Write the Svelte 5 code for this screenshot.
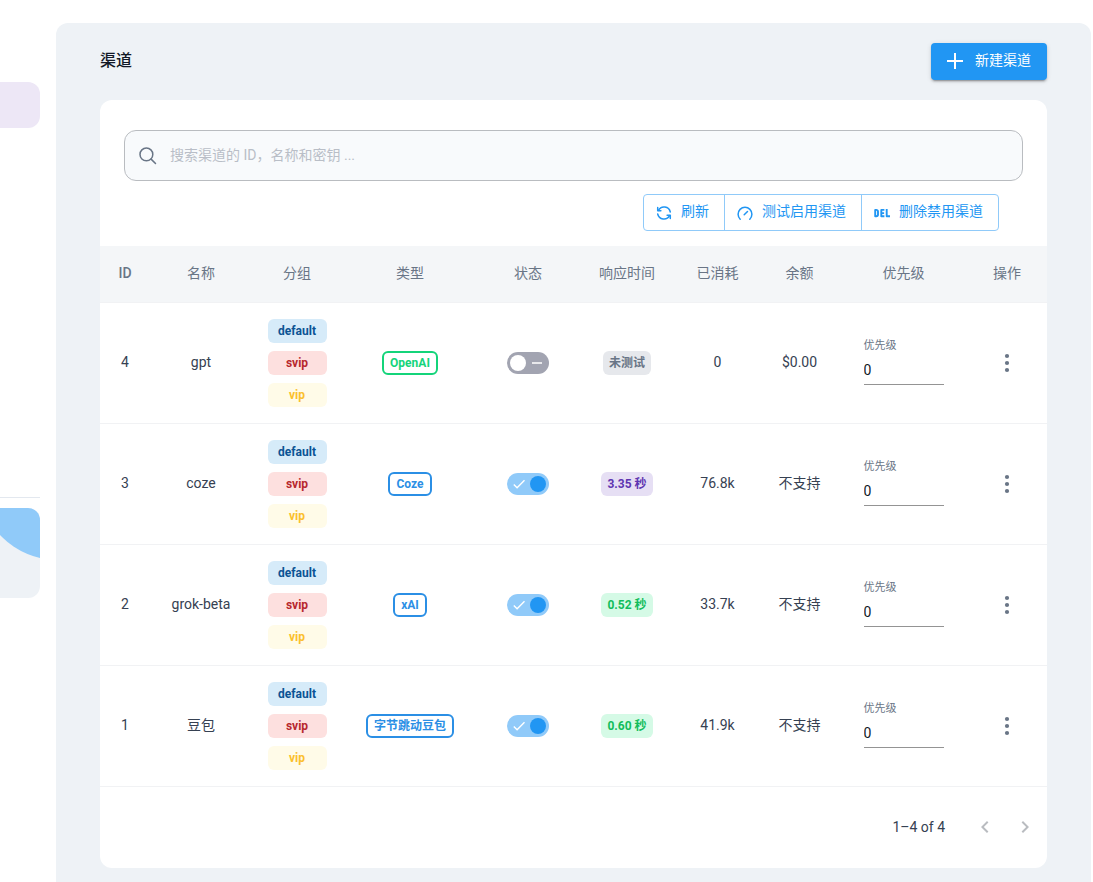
<script lang="ts">
	interface Channel {
		id: number;
		name: string;
		groups: string[];
		type: string;
		typeColor: string;
		enabled: boolean;
		response: string;
		speed: string;
		used: string;
		balance: string;
		priority: number;
	}

	const headers = ['ID', '名称', '分组', '类型', '状态', '响应时间', '已消耗', '余额', '优先级', '操作'];
	const groups = ['default', 'svip', 'vip'];

	let keyword = $state('');
	let channels: Channel[] = $state([
		{ id: 4, name: 'gpt', groups, type: 'OpenAI', typeColor: 'green', enabled: false, response: '未测试', speed: 'none', used: '0', balance: '$0.00', priority: 0 },
		{ id: 3, name: 'coze', groups, type: 'Coze', typeColor: 'blue', enabled: true, response: '3.35 秒', speed: 'medium', used: '76.8k', balance: '不支持', priority: 0 },
		{ id: 2, name: 'grok-beta', groups, type: 'xAI', typeColor: 'blue', enabled: true, response: '0.52 秒', speed: 'fast', used: '33.7k', balance: '不支持', priority: 0 },
		{ id: 1, name: '豆包', groups, type: '字节跳动豆包', typeColor: 'blue', enabled: true, response: '0.60 秒', speed: 'fast', used: '41.9k', balance: '不支持', priority: 0 }
	]);
</script>

<div class="layout">
	<aside class="sidebar">
		<div class="menu-active"></div>
		<div class="side-bottom">
			<div class="user-card"></div>
		</div>
	</aside>

	<main class="panel">
		<header class="page-header">
			<h1>渠道</h1>
			<button class="btn-new">
				<svg width="20" height="20" viewBox="0 0 20 20" fill="none" stroke="currentColor" stroke-width="2">
					<path d="M10 1v16M2 9h16" />
				</svg>
				<span class="btn-text">新建渠道</span>
			</button>
		</header>

		<section class="card">
			<div class="search">
				<svg width="20" height="20" viewBox="0 0 20 20" fill="none" stroke="currentColor" stroke-width="1.5" stroke-linecap="round">
					<circle cx="8.4" cy="8.4" r="6.4" />
					<path d="M13.1 13.1l4.4 4.4" />
				</svg>
				<input type="text" bind:value={keyword} placeholder="搜索渠道的 ID，名称和密钥 ..." aria-label="搜索渠道" />
			</div>

			<div class="toolbar">
				<div class="btn-group">
					<button>
						<svg width="18" height="18" viewBox="0 0 18 18" fill="none" stroke="currentColor" stroke-width="1.5" stroke-linecap="round" stroke-linejoin="round">
							<path d="M3.4 6.4A6.4 6.4 0 0 1 15.3 8" />
							<path d="M2.7 3.6v3.2h3.2" />
							<path d="M14.6 11.6A6.4 6.4 0 0 1 2.7 10" />
							<path d="M15.3 14.4v-3.2h-3.2" />
						</svg>
						<span class="btn-text">刷新</span>
					</button>
					<button>
						<svg width="18" height="18" viewBox="0 0 18 18" fill="none" stroke="currentColor" stroke-width="1.5" stroke-linecap="round" stroke-linejoin="round">
							<path d="M4.2 15.2a6.9 6.9 0 1 1 9.6 0" />
							<path d="M8.2 10.8l3.3-3.3" />
						</svg>
						<span class="btn-text">测试启用渠道</span>
					</button>
					<button>
						<svg width="18" height="18" viewBox="0 0 18 18" fill="none" stroke="currentColor" stroke-width="1.9" stroke-linejoin="round">
							<path d="M2.2 5.9v6.4h1.1a1.7 1.7 0 0 0 1.7-1.7v-3A1.7 1.7 0 0 0 3.3 5.9z" />
							<path d="M11.4 5.9H8.3v6.4h3.1M8.3 9.1h2.8" />
							<path d="M13.7 5v7.3h3.3" />
						</svg>
						<span class="btn-text">删除禁用渠道</span>
					</button>
				</div>
			</div>

			<table>
				<thead>
					<tr>
						{#each headers as header}
							<th>{header}</th>
						{/each}
					</tr>
				</thead>
				<tbody>
					{#each channels as channel (channel.id)}
						<tr>
							<td>{channel.id}</td>
							<td>{channel.name}</td>
							<td class="tall">
								<div class="groups">
									{#each channel.groups as group}
										<span class="tag {group}">{group}</span>
									{/each}
								</div>
							</td>
							<td><span class="tag outlined {channel.typeColor}">{channel.type}</span></td>
							<td>
								<label class="switch">
									<input type="checkbox" bind:checked={channel.enabled} aria-label="启用 {channel.name}" />
									<svg width="42" height="22" viewBox="0 0 42 22" fill="none" stroke="#fff">
										{#if channel.enabled}
											<path d="M6.8 11.4l3.3 3.3 7.4-7.4" stroke-width="1.4" />
											<circle cx="31" cy="11" r="8" fill="#2196f3" stroke="none" />
										{:else}
											<circle cx="11" cy="11" r="8" fill="#fff" stroke="none" />
											<path d="M25 11h10" stroke-width="1.5" />
										{/if}
									</svg>
								</label>
							</td>
							<td><span class="tag {channel.speed}">{channel.response}</span></td>
							<td>{channel.used}</td>
							<td>{channel.balance}</td>
							<td>
								<div class="priority">
									<label for="priority-{channel.id}">优先级</label>
									<input id="priority-{channel.id}" type="text" inputmode="numeric" bind:value={channel.priority} />
								</div>
							</td>
							<td class="tall">
								<button class="icon-btn" aria-label="操作">
									<svg width="24" height="24" viewBox="0 0 24 24" fill="currentColor">
										<circle cx="12" cy="5" r="2.1" />
										<circle cx="12" cy="12" r="2.1" />
										<circle cx="12" cy="19" r="2.1" />
									</svg>
								</button>
							</td>
						</tr>
					{/each}
				</tbody>
			</table>

			<footer class="pagination">
				<span>1–4 of 4</span>
				<div class="pager">
					<button class="icon-btn" disabled aria-label="上一页">
						<svg width="24" height="24" viewBox="0 0 24 24" fill="currentColor">
							<path d="M15.41 16.59 10.83 12l4.58-4.59L14 6l-6 6 6 6z" />
						</svg>
					</button>
					<button class="icon-btn" disabled aria-label="下一页">
						<svg width="24" height="24" viewBox="0 0 24 24" fill="currentColor">
							<path d="M8.59 16.59 13.17 12 8.59 7.41 10 6l6 6-6 6z" />
						</svg>
					</button>
				</div>
			</footer>
		</section>
	</main>
</div>

<style>
	:global(body) {
		background: #fff;
		color: #364152;
		font-family: Roboto, 'Noto Sans CJK SC', sans-serif;
		font-size: 14px;
		line-height: 24px;
	}

	.layout {
		display: flex;
		min-height: 100vh;
	}

	.layout * {
		box-sizing: border-box;
	}

	button,
	input {
		font: inherit;
		color: inherit;
		margin: 0;
	}

	button {
		cursor: pointer;
	}

	svg {
		display: block;
		flex-shrink: 0;
	}

	.sidebar {
		width: 40px;
		margin-right: 16px;
		padding-top: 82px;
		flex-shrink: 0;
	}

	.menu-active {
		height: 46px;
		background: #ede7f6;
		border-radius: 0 12px 12px 0;
	}

	.side-bottom {
		margin-top: 369px;
		padding-top: 10px;
		border-top: 1px solid #e3e8ef;
	}

	.user-card {
		position: relative;
		height: 90px;
		overflow: hidden;
		background: #eef2f6;
		border-radius: 0 12px 12px 0;
	}

	.user-card::after {
		content: '';
		position: absolute;
		width: 157px;
		height: 157px;
		top: -105px;
		right: -96px;
		background: #90caf9;
		border-radius: 50%;
	}

	.panel {
		flex: 1;
		min-width: 0;
		margin: 23px 2px 0 0;
		padding: 20px 44px 14px;
		background: #eef2f6;
		border-radius: 12px 12px 0 0;
	}

	.page-header {
		display: flex;
		align-items: center;
		justify-content: space-between;
		margin-bottom: 20px;
	}

	h1 {
		margin: 0;
		padding-bottom: 2px;
		font-size: 16px;
		font-weight: 500;
		color: #121926;
	}

	.btn-new {
		display: flex;
		align-items: center;
		gap: 10px;
		height: 37px;
		padding: 0 16px 0 14px;
		border: none;
		border-radius: 4px;
		background: #2196f3;
		color: #fff;
		box-shadow:
			0 3px 1px -2px rgba(0, 0, 0, 0.2),
			0 2px 2px 0 rgba(0, 0, 0, 0.14),
			0 1px 5px 0 rgba(0, 0, 0, 0.12);
	}

	.btn-text {
		padding-bottom: 3px;
	}

	.card {
		padding-top: 30px;
		overflow: hidden;
		background: #fff;
		border-radius: 12px;
	}

	.search {
		display: flex;
		align-items: center;
		gap: 12px;
		height: 51px;
		margin: 0 24px;
		padding: 0 13px;
		color: #697586;
		background: #f8fafc;
		border: 1px solid #b9bcc0;
		border-radius: 12px;
	}

	.search input {
		flex: 1;
		padding: 0 0 2px;
		border: none;
		outline: none;
		background: none;
	}

	.search input::placeholder {
		color: #b9bec7;
		opacity: 1;
	}

	.toolbar {
		display: flex;
		justify-content: flex-end;
		padding: 13px 48px 15px;
	}

	.btn-group {
		display: flex;
		border: 1px solid #90caf9;
		border-radius: 4px;
	}

	.btn-group button {
		display: flex;
		align-items: center;
		gap: 8px;
		height: 35px;
		padding: 0 15px 0 11px;
		border: none;
		background: none;
		color: #2196f3;
	}

	.btn-group button + button {
		border-left: 1px solid #90caf9;
	}

	table {
		width: 100%;
		table-layout: fixed;
		border-collapse: separate;
		border-spacing: 0;
	}

	th,
	td {
		padding: 15px 0 17px;
		text-align: center;
		vertical-align: middle;
		border-bottom: 1px solid #f1f2f4;
	}

	.tall {
		padding: 16px 0;
	}

	th {
		background: #f4f6f8;
		color: #697586;
		font-weight: 400;
	}

	th:nth-child(1) {
		width: 50px;
		font-weight: 500;
	}

	th:nth-child(2) {
		width: 102px;
	}

	th:nth-child(3) {
		width: 90px;
	}

	th:nth-child(4) {
		width: 136px;
	}

	th:nth-child(5) {
		width: 100px;
	}

	th:nth-child(6) {
		width: 98px;
	}

	th:nth-child(7) {
		width: 83px;
	}

	th:nth-child(8) {
		width: 81px;
	}

	th:nth-child(9) {
		width: 127px;
	}

	th:nth-child(10) {
		width: 80px;
	}

	.groups {
		display: flex;
		flex-direction: column;
		gap: 8px;
		width: 59px;
		margin: 0 auto;
	}

	.tag {
		display: inline-block;
		height: 24px;
		padding: 0 6px;
		border-radius: 6px;
		font-size: 12px;
		font-weight: 700;
		vertical-align: middle;
		white-space: nowrap;
	}

	.default {
		background: #d6ebf9;
		color: #0b5394;
	}

	.svip {
		background: #fde0df;
		color: #b7282e;
	}

	.vip {
		background: #fffbe8;
		color: #fbc02d;
	}

	.outlined {
		border: 2px solid;
		line-height: 20px;
	}

	.green {
		color: #14d47a;
	}

	.blue {
		color: #2b8fe5;
	}

	.none {
		background: #e6e8ec;
		color: #697586;
	}

	.medium {
		background: #e6dff4;
		color: #5e35b1;
	}

	.fast {
		background: #d5fae6;
		color: #12bd5c;
	}

	.switch {
		display: inline-grid;
		vertical-align: middle;
		cursor: pointer;
	}

	.switch input,
	.switch svg {
		grid-area: 1 / 1;
	}

	.switch input {
		appearance: none;
		width: 42px;
		height: 22px;
		border-radius: 11px;
		background: #a2a4b1;
	}

	.switch input:checked {
		background: #90caf9;
	}

	.priority {
		display: flex;
		flex-direction: column;
		width: 80px;
		margin: 0 auto;
		text-align: left;
	}

	.priority label {
		font-size: 11px;
		line-height: 14px;
		color: #697586;
	}

	.priority input {
		width: 100%;
		height: 32px;
		padding: 2px 0 0;
		border: none;
		border-bottom: 1px solid #949494;
		outline: none;
		background: none;
		color: #121926;
	}

	.icon-btn {
		display: inline-flex;
		padding: 8px;
		border: none;
		background: none;
		color: #697586;
		vertical-align: middle;
	}

	.icon-btn:disabled {
		color: #b9bcc0;
		cursor: default;
	}

	.pagination {
		display: flex;
		align-items: center;
		justify-content: flex-end;
		gap: 20px;
		height: 81px;
		padding: 0 2px 2px 0;
	}

	.pager {
		display: flex;
	}
</style>
